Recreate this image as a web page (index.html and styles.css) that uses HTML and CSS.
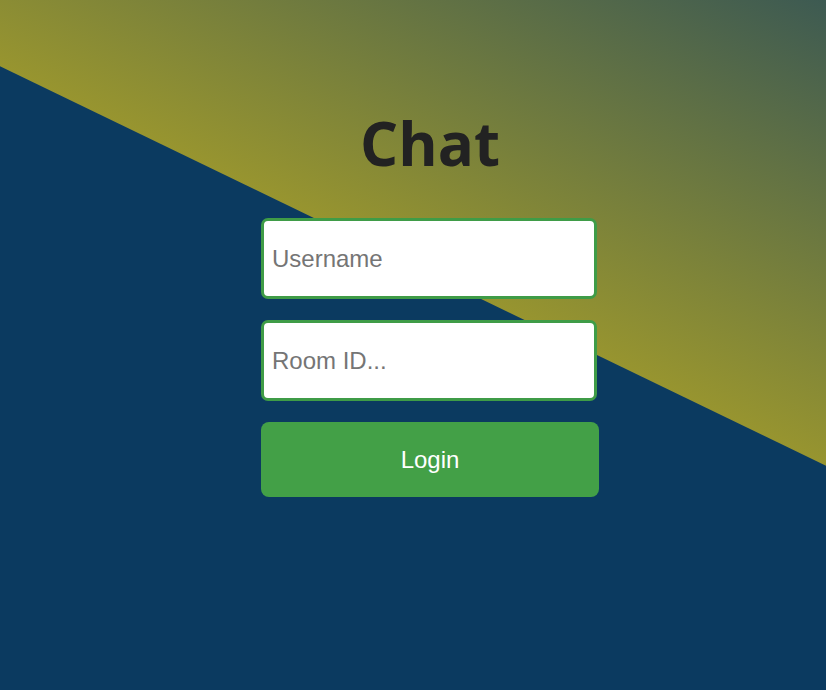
FILE: index.html
```html
<!DOCTYPE html>
<html lang="en">
<head>
<meta charset="utf-8">
<title>Chat</title>
<link rel="stylesheet" href="styles.css">
</head>
<body>
<div class="backdrop"></div>
<main class="page">
  <h1 class="title">Chat</h1>
  <form class="login-form">
    <input class="field" type="text" placeholder="Username">
    <input class="field" type="text" placeholder="Room ID...">
    <button class="login-btn" type="button">Login</button>
  </form>
</main>
</body>
</html>
```
FILE: styles.css
```css
html, body {
  margin: 0;
  padding: 0;
  height: 100%;
}
body {
  background: #0b3a60;
  font-family: "Liberation Sans", Arial, sans-serif;
  overflow: hidden;
  position: relative;
}
.backdrop {
  position: absolute;
  inset: 0;
  background: linear-gradient(26deg, #98952f 57%, #3d5a52 100%);
  clip-path: polygon(0 0, 100% 0, 100% 67.5%, 0 9.6%);
  z-index: 0;
}
.page {
  position: relative;
  z-index: 1;
  display: flex;
  flex-direction: column;
  align-items: center;
  padding-top: 107px;
  padding-left: 34px;
}
.title {
  margin: 0;
  font-family: "Open Sans", sans-serif;
  font-weight: 700;
  font-size: 60px;
  line-height: 72px;
  color: #222222;
}
.login-form {
  margin-top: 39px;
  width: 338px;
  display: flex;
  flex-direction: column;
  gap: 21px;
}
.field {
  box-sizing: border-box;
  width: 336px;
  height: 81px;
  border: 3px solid #3f9c47;
  border-radius: 7px;
  background: #ffffff;
  padding: 0 8px;
  font-family: "Liberation Sans", Arial, sans-serif;
  font-size: 24px;
  color: #333;
  outline: none;
}
.field::placeholder {
  color: #757575;
}
.login-btn {
  box-sizing: border-box;
  width: 338px;
  height: 75px;
  border: none;
  border-radius: 8px;
  background: #43a047;
  color: #ffffff;
  font-family: "Liberation Sans", Arial, sans-serif;
  font-size: 24px;
  cursor: pointer;
}
```
